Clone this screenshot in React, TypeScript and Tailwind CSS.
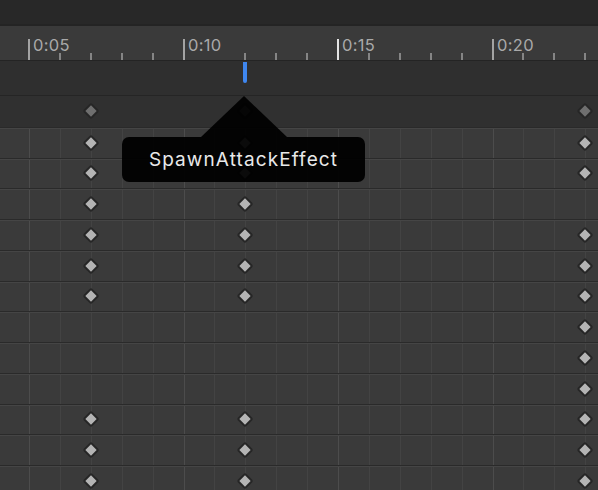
import React from "react";

const X0 = 29;
const U = 30.9;
const xAt = (k: number) => X0 + k * U;

const ticks = Array.from({ length: 19 }, (_, k) => k);
const labels: Record<number, string> = { 0: "0:05", 5: "0:10", 10: "0:15", 15: "0:20" };

const rows: number[][] = [
  [2, 7, 18],
  [2, 7, 18],
  [2, 7],
  [2, 7, 18],
  [2, 7, 18],
  [2, 7, 18],
  [18],
  [18],
  [18],
  [2, 7, 18],
  [2, 7, 18],
  [2, 7, 18],
];

function Diamond({ k, dark }: { k: number; dark?: boolean }) {
  return (
    <div
      className={
        "absolute top-1/2 w-[12px] h-[12px] -translate-x-1/2 -translate-y-1/2 rotate-45 rounded-[2px] border-2 border-[#262626] " +
        (dark ? "bg-[#6f6f6f]" : "bg-[#b4b4b4]")
      }
      style={{ left: xAt(k) }}
    />
  );
}

export default function App() {
  return (
    <div className="relative w-[598px] h-[490px] overflow-hidden bg-[#3a3a3a] font-['Inter',sans-serif] select-none">
      <div className="h-[24px] bg-[#282828]" />
      {/* Ruler */}
      <div className="relative h-[37px] bg-[#3a3a3a] border-t-2 border-b border-[#242424]">
        {ticks.map((k) => {
          if (k === 6) return null;
          const major = k % 5 === 0;
          const x = Math.round(xAt(k));
          return (
            <React.Fragment key={k}>
              <div
                className={
                  "absolute bottom-0 " +
                  (major
                    ? k === 10
                      ? "w-[2px] h-[21px] bg-[#e4e4e4]"
                      : "w-[2px] h-[21px] bg-[#a3a3a3]"
                    : "w-[2px] h-[7px] bg-[#858585]")
                }
                style={{ left: x - 1 }}
              />
              {major && (
                <div
                  className="absolute top-[11px] text-[16.5px] leading-none tracking-[0.3px] text-[#a9a9a9]"
                  style={{ left: x + 4 }}
                >
                  {labels[k]}
                </div>
              )}
            </React.Fragment>
          );
        })}
      </div>
      {/* Event strip */}
      <div className="relative h-[35px] bg-[#2f2f2f] border-b border-[#252525]">
        <div className="absolute left-[243px] top-[1px] w-[4px] h-[21px] rounded-b-[3px] bg-[#3f87f0]" />
      </div>
      {/* Summary row */}
      <div className="relative h-[30.75px] bg-[#303030]">
        {rows[0].map((k) => (
          <Diamond key={k} k={k} dark />
        ))}
      </div>
      {/* Property rows */}
      <div className="relative flex flex-col">
        {ticks.map((k) => (
          <div
            key={k}
            className={
              "absolute top-0 bottom-0 w-px " +
              (k % 5 === 0 ? "bg-[#4c4c4c]" : "bg-[#434343]")
            }
            style={{ left: Math.round(xAt(k)) }}
          />
        ))}
        {rows.map((keys, i) => (
          <div
            key={i}
            className="relative h-[30.75px] shrink-0 border-t border-[#2a2a2a] shadow-[inset_0_1px_0_#454545]"
          >
            {keys.map((k) => (
              <Diamond key={k} k={k} />
            ))}
          </div>
        ))}
      </div>
      {/* Tooltip */}
      <div className="absolute left-[122px] top-[96px] w-[243px] flex flex-col items-center">
        <div className="w-0 h-0 border-l-[43px] border-r-[43px] border-b-[41px] border-l-transparent border-r-transparent border-b-black/[0.94]" />
        <div className="w-[243px] h-[45px] rounded-[7px] bg-black/[0.94] flex items-center justify-center">
          <span className="text-[19px] leading-none tracking-[1.1px] text-[#e9e9e9]">
            SpawnAttackEffect
          </span>
        </div>
      </div>
    </div>
  );
}
